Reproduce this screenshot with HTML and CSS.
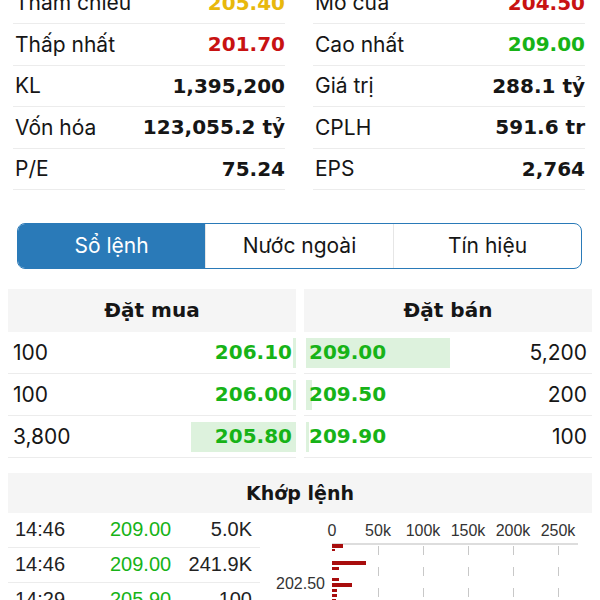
FILE: index.html
```html
<!DOCTYPE html>
<html>
<head>
    <meta charset="UTF-8">
    <title>Chi tiết cổ phiếu</title>
    <link rel="stylesheet" href="styles.css">
</head>
<body>
    <div class="stats">
        <div class="stat-col">
            <div class="stat-row"><span class="label">Tham chiếu</span><span class="value ref">205.40</span></div>
            <div class="stat-row"><span class="label">Thấp nhất</span><span class="value down">201.70</span></div>
            <div class="stat-row"><span class="label">KL</span><span class="value">1,395,200</span></div>
            <div class="stat-row"><span class="label">Vốn hóa</span><span class="value">123,055.2 tỷ</span></div>
            <div class="stat-row"><span class="label">P/E</span><span class="value">75.24</span></div>
        </div>
        <div class="stat-col">
            <div class="stat-row"><span class="label">Mở cửa</span><span class="value down">204.50</span></div>
            <div class="stat-row"><span class="label">Cao nhất</span><span class="value up">209.00</span></div>
            <div class="stat-row"><span class="label">Giá trị</span><span class="value">288.1 tỷ</span></div>
            <div class="stat-row"><span class="label">CPLH</span><span class="value">591.6 tr</span></div>
            <div class="stat-row"><span class="label">EPS</span><span class="value">2,764</span></div>
        </div>
    </div>

    <div class="tabs">
        <div class="tab active">Sổ lệnh</div>
        <div class="tab">Nước ngoài</div>
        <div class="tab">Tín hiệu</div>
    </div>

    <div class="book">
        <div class="book-side buy">
            <div class="book-head">Đặt mua</div>
            <div class="book-row"><span class="bar" style="width: 2.8px"></span><span class="qty">100</span><span class="price">206.10</span></div>
            <div class="book-row"><span class="bar" style="width: 2.8px"></span><span class="qty">100</span><span class="price">206.00</span></div>
            <div class="book-row"><span class="bar" style="width: 105px"></span><span class="qty">3,800</span><span class="price">205.80</span></div>
        </div>
        <div class="book-side sell">
            <div class="book-head">Đặt bán</div>
            <div class="book-row"><span class="bar" style="width: 144px"></span><span class="price">209.00</span><span class="qty">5,200</span></div>
            <div class="book-row"><span class="bar" style="width: 5.5px"></span><span class="price">209.50</span><span class="qty">200</span></div>
            <div class="book-row"><span class="bar" style="width: 2.8px"></span><span class="price">209.90</span><span class="qty">100</span></div>
        </div>
    </div>

    <div class="match">
        <div class="match-head">Khớp lệnh</div>
        <div class="match-body">
            <div class="match-list">
                <div class="match-row"><span class="time">14:46</span><span class="mprice">209.00</span><span class="mvol">5.0K</span></div>
                <div class="match-row"><span class="time">14:46</span><span class="mprice">209.00</span><span class="mvol">241.9K</span></div>
                <div class="match-row"><span class="time">14:29</span><span class="mprice">205.90</span><span class="mvol">100</span></div>
            </div>
            <svg class="chart" width="332" height="100" viewBox="0 0 332 100">
                <g class="axis-text" text-anchor="middle">
                    <text x="72" y="23">0</text>
                    <text x="118" y="23">50k</text>
                    <text x="163" y="23">100k</text>
                    <text x="208" y="23">150k</text>
                    <text x="253" y="23">200k</text>
                    <text x="298" y="23">250k</text>
                </g>
                <line x1="72" y1="31" x2="318" y2="31" stroke="#bbb" stroke-width="1"/>
                <g stroke="#c8c8c8" stroke-width="1" stroke-dasharray="9 12">
                    <line x1="118.5" y1="33" x2="118.5" y2="100"/>
                    <line x1="163.5" y1="33" x2="163.5" y2="100"/>
                    <line x1="208.5" y1="33" x2="208.5" y2="100"/>
                    <line x1="253.5" y1="33" x2="253.5" y2="100"/>
                    <line x1="298.5" y1="33" x2="298.5" y2="100"/>
                </g>
                <g fill="#a80d0d">
                    <rect x="72" y="31" width="11" height="4"/>
                    <rect x="72" y="36" width="3" height="2"/>
                    <rect x="72" y="48" width="34" height="4"/>
                    <rect x="72" y="54" width="7" height="3"/>
                    <rect x="72" y="65" width="7" height="3"/>
                    <rect x="72" y="70" width="20" height="4"/>
                    <rect x="72" y="76" width="5" height="3"/>
                    <rect x="72" y="81" width="5" height="3"/>
                    <rect x="72" y="86" width="4" height="3"/>
                    <rect x="72" y="92" width="6" height="3"/>
                </g>
                <text class="axis-text" x="65" y="76" text-anchor="end">202.50</text>
            </svg>
        </div>
    </div>
</body>
</html>
```

FILE: styles.css
```css
:root {
    --up: #17b317;
    --down: #c81212;
    --ref: #e8b80c;
    --blue: #2a7ab8;
    --line: #ececec;
    --head: #f5f5f5;
    --text: #161616;
}

body {
    margin: 0;
    font-family: Inter, 'Noto Sans', sans-serif;
    color: var(--text);
    background: white;
}

/* thong tin chung */
.stats {
    display: grid;
    grid-template-columns: 272px 272px;
    gap: 28px;
    padding: 0 15px 0 13px;
    margin-top: -17.5px;
}

.stat-row {
    display: flex;
    justify-content: space-between;
    align-items: center;
    height: 40.5px;
    border-bottom: 1px solid var(--line);
    padding-left: 2px;
}

.label {
    font-size: 21px;
}

.value {
    font-family: 'DejaVu Sans', sans-serif;
    font-weight: bold;
    font-size: 20px;
}

.value.up { color: var(--up); }
.value.down { color: var(--down); }
.value.ref { color: var(--ref); }

/* tab */
.tabs {
    display: flex;
    margin: 33px 18px 0 17px;
    height: 43.5px;
    border: 1.5px solid var(--blue);
    border-radius: 8px;
    overflow: hidden;
}

.tab {
    flex: 1;
    display: flex;
    align-items: center;
    justify-content: center;
    font-size: 21px;
    border-left: 1px solid #e6e6e6;
}

.tab:first-child {
    border-left: none;
}

.tab.active {
    background: var(--blue);
    color: white;
}

/* so lenh */
.book {
    display: grid;
    grid-template-columns: 1fr 1fr;
    gap: 8px;
    padding: 0 8px;
    margin-top: 20px;
}

.book-head {
    background: var(--head);
    height: 43px;
    display: flex;
    align-items: center;
    justify-content: center;
    font-family: 'DejaVu Sans', sans-serif;
    font-weight: bold;
    font-size: 20px;
}

.book-row {
    position: relative;
    display: flex;
    justify-content: space-between;
    align-items: center;
    height: 41px;
    border-bottom: 1px solid var(--line);
}

.bar {
    position: absolute;
    top: 6px;
    bottom: 5px;
    background: #ddf2dd;
}

.buy .bar { right: 0; }
.sell .bar { left: 2px; }

.book-row span:not(.bar) {
    position: relative;
}

.qty {
    font-size: 21px;
}

.price {
    font-family: 'DejaVu Sans', sans-serif;
    font-weight: bold;
    font-size: 20px;
    color: var(--up);
}

.buy .book-row { padding: 0 4px 0 5px; }
.sell .book-row { padding: 0 5px 0 5px; }

/* khop lenh */
.match {
    margin: 15px 8px 0;
}

.match-head {
    background: var(--head);
    height: 40px;
    display: flex;
    align-items: center;
    justify-content: center;
    font-family: 'DejaVu Sans', sans-serif;
    font-weight: bold;
    font-size: 19px;
}

.match-body {
    display: flex;
}

.match-list {
    width: 252px;
}

.match-row {
    display: flex;
    align-items: center;
    height: 34px;
    border-bottom: 1px solid var(--line);
    padding: 0 8px 0 7px;
    font-family: 'Liberation Sans', sans-serif;
    font-size: 20px;
}

.time {
    width: 95px;
    color: #222;
}

.mprice {
    color: var(--up);
}

.mvol {
    flex: 1;
    text-align: right;
    color: #222;
}

.chart {
    display: block;
}

.axis-text {
    font-family: 'Liberation Sans', sans-serif;
    font-size: 16px;
    fill: #333;
}
```
